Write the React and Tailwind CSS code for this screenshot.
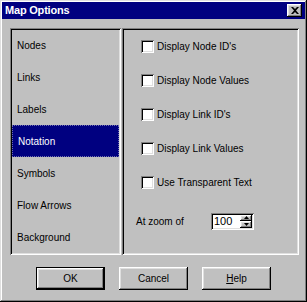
import React, { useState } from 'react';

const pages = ['Nodes', 'Links', 'Labels', 'Notation', 'Symbols', 'Flow Arrows', 'Background'];

const options = [
    'Display Node ID\'s',
    'Display Node Values',
    'Display Link ID\'s',
    'Display Link Values',
    'Use Transparent Text',
];

const raised = 'shadow-[inset_-1px_-1px_0_#000,inset_1px_1px_0_#fff,inset_-2px_-2px_0_#808080,inset_2px_2px_0_#dfdfdf]';
const sunken = 'shadow-[inset_1px_1px_0_#808080,inset_-1px_-1px_0_#fff,inset_2px_2px_0_#000,inset_-2px_-2px_0_#dfdfdf]';

const CheckBox = ({ label }) => (
    <label className="h-[34px] flex items-center pl-[17px]">
        <span className={`w-[13px] h-[13px] bg-white ${sunken}`} />
        <span className="ml-[3px]">{label}</span>
    </label>
);

const Button = ({ children, isDefault }) => (
    <button
        className={`w-[69px] h-[23px] bg-[#c0c0c0] text-black ${
            isDefault
                ? 'border border-black shadow-[inset_-1px_-1px_0_#000,inset_1px_1px_0_#fff,inset_-2px_-2px_0_#808080,inset_2px_2px_0_#dfdfdf]'
                : raised
        }`}
    >
        {children}
    </button>
);

const App = () => {
    const [selected, setSelected] = useState('Notation');

    return (
        <div
            className="w-[307px] h-[302px] bg-[#c0c0c0] p-[2px] flex flex-col text-[10px] text-black shadow-[inset_-1px_-1px_0_#000,inset_1px_1px_0_#dfdfdf,inset_-2px_-2px_0_#808080,inset_2px_2px_0_#fff]"
            style={{ fontFamily: '"Liberation Sans", Arial, sans-serif' }}
        >
            <div className="h-[17px] bg-[#000080] flex items-center justify-between pl-[3px] pr-[3px]">
                <span className="text-white font-bold text-[11px] tracking-[-0.2px]">Map Options</span>
                <span className={`w-[15px] h-[13px] bg-[#c0c0c0] flex items-center justify-center ${raised}`}>
                    <svg width="8" height="7" viewBox="0 0 8 7">
                        <path d="M0 0h2l2 2 2-2h2L5 3.5 8 7H6L4 5 2 7H0l3-3.5z" fill="#000" />
                    </svg>
                </span>
            </div>

            <div className="flex mt-[9px] ml-[8px]">
                <div className={`w-[111px] h-[227px] bg-[#c0c0c0] p-[2px] pt-[1px] flex flex-col ${sunken}`}>
                    {pages.map((page) => (
                        <div
                            key={page}
                            onClick={() => setSelected(page)}
                            className={`h-[32px] flex items-center pl-[5px] ${
                                selected === page
                                    ? 'bg-[#000080] text-white border border-dotted border-[#7070b0] pl-[4px]'
                                    : ''
                            }`}
                        >
                            {page}
                        </div>
                    ))}
                </div>

                <div className={`w-[177px] h-[227px] ml-[1px] bg-[#c0c0c0] p-[2px] pt-[1px] flex flex-col ${sunken}`}>
                    {options.map((opt) => (
                        <CheckBox key={opt} label={opt} />
                    ))}
                    <div className="flex items-center mt-[14px] pl-[12px] h-[16px]">
                        <span className="w-[75px]">At zoom of</span>
                        <div className={`w-[43px] h-[17px] bg-white flex items-center pl-[3px] pr-[2px] ${sunken}`}>
                            <span className="flex-1 text-[11px] leading-none">100</span>
                            <div className="flex flex-col">
                                <span className={`w-[12px] h-[6.5px] bg-[#c0c0c0] flex items-center justify-center ${raised}`}>
                                    <svg width="5" height="3" viewBox="0 0 5 3">
                                        <path d="M2.5 0L5 3H0z" fill="#000" />
                                    </svg>
                                </span>
                                <span className={`w-[12px] h-[6.5px] bg-[#c0c0c0] flex items-center justify-center ${raised}`}>
                                    <svg width="5" height="3" viewBox="0 0 5 3">
                                        <path d="M0 0h5L2.5 3z" fill="#000" />
                                    </svg>
                                </span>
                            </div>
                        </div>
                    </div>
                </div>
            </div>

            <div className="flex mt-[12px] ml-[34px] gap-[14px]">
                <Button isDefault>OK</Button>
                <Button>Cancel</Button>
                <Button>
                    <span className="underline">H</span>elp
                </Button>
            </div>
        </div>
    );
};

export default App;
